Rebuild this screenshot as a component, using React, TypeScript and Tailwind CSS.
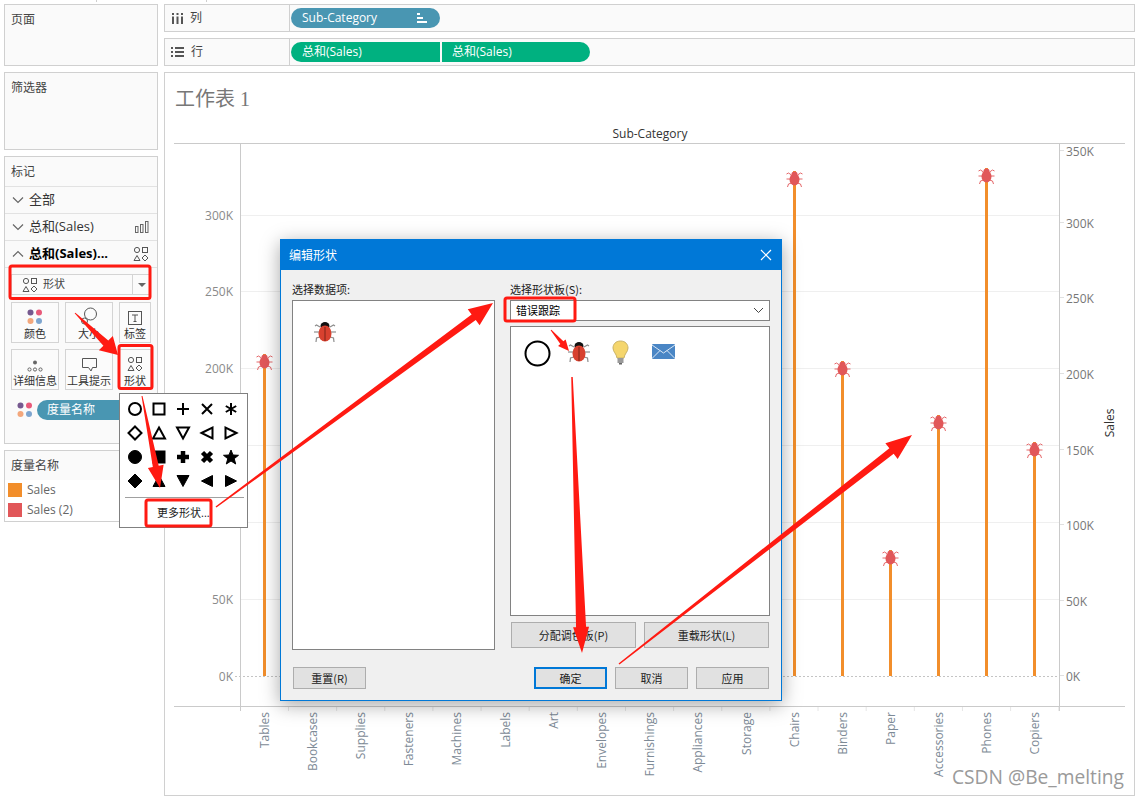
import type { ReactNode } from "react";

const bars = [
  { name: "Tables", x: 264.5, y: 362 },
  { name: "Bookcases", x: 312.7, y: 500 },
  { name: "Supplies", x: 360.9, y: 600 },
  { name: "Fasteners", x: 409, y: 660 },
  { name: "Machines", x: 457.3, y: 500 },
  { name: "Labels", x: 505.5, y: 650 },
  { name: "Art", x: 553.7, y: 620 },
  { name: "Envelopes", x: 601.9, y: 640 },
  { name: "Furnishings", x: 650, y: 560 },
  { name: "Appliances", x: 698.3, y: 560 },
  { name: "Storage", x: 746.5, y: 500 },
  { name: "Chairs", x: 794.5, y: 179 },
  { name: "Binders", x: 842.5, y: 369 },
  { name: "Paper", x: 890.5, y: 558 },
  { name: "Accessories", x: 938.5, y: 423 },
  { name: "Phones", x: 986.5, y: 176 },
  { name: "Copiers", x: 1034.5, y: 450 },
];

const leftTicks = [
  { label: "300K", y: 215 },
  { label: "250K", y: 291 },
  { label: "200K", y: 368 },
  { label: "150K", y: 445 },
  { label: "100K", y: 522 },
  { label: "50K", y: 599 },
  { label: "0K", y: 676 },
];

const rightTicks = [
  { label: "350K", y: 151 },
  { label: "300K", y: 223 },
  { label: "250K", y: 298 },
  { label: "200K", y: 374 },
  { label: "150K", y: 450 },
  { label: "100K", y: 525 },
  { label: "50K", y: 601 },
  { label: "0K", y: 676 },
];

const cjk = "font-['Open_Sans','Noto_Sans_CJK_SC',sans-serif]";
const dialogFont = "font-['Noto_Sans_CJK_SC','Liberation_Sans',sans-serif]";

// chart mark, x/y are the centre of the bug
const ChartBug = ({ x, y }: { x: number; y: number }) => (
  <g transform={`translate(${x} ${y})`}>
    <g stroke="#e15759" strokeWidth="0.9" fill="none">
      <path d="M-3 -4 L-6 -6 L-8 -5" />
      <path d="M3 -4 L6 -6 L8 -5" />
      <path d="M-4 0 L-8 0" />
      <path d="M4 0 L8 0" />
      <path d="M-3 4 L-6 5 L-7 8" />
      <path d="M3 4 L6 5 L7 8" />
    </g>
    <ellipse cx="0" cy="-5" rx="3" ry="2.5" fill="#e15759" />
    <ellipse cx="0" cy="0.5" rx="5" ry="6" fill="#e15759" />
  </g>
);

const DialogBug = () => (
  <svg width="24" height="24" viewBox="0 0 24 24" fill="none">
    <g stroke="#8d8d8d" strokeWidth="1.2">
      <path d="M7 7 L3.5 5 L2 6" />
      <path d="M17 7 L20.5 5 L22 6" />
      <path d="M6 12 L1 12" />
      <path d="M18 12 L23 12" />
      <path d="M7 17 L3.5 18 L3 22" />
      <path d="M17 17 L20.5 18 L21 22" />
    </g>
    <ellipse cx="12" cy="6" rx="4.5" ry="4" fill="#111" />
    <ellipse cx="12" cy="13.5" rx="6.5" ry="8" fill="#d8412f" />
    <path d="M12 7 V21" stroke="#7d2418" strokeWidth="1" />
  </svg>
);

const ShapesIcon = ({ size = 16 }: { size?: number }) => (
  <svg width={size} height={size} viewBox="0 0 16 16" fill="none" stroke="#555" strokeWidth="1">
    <circle cx="4" cy="4" r="2.6" />
    <rect x="9.5" y="1.5" width="5" height="5" />
    <path d="M4 9.5 L7 14.5 H1 Z" />
    <path d="M12 9 L15 12 L12 15 L9 12 Z" />
  </svg>
);

const ColorDots = () => (
  <svg width="16" height="16" viewBox="0 0 16 16">
    <circle cx="3.5" cy="3.5" r="3" fill="#76598f" />
    <circle cx="12" cy="3.5" r="3" fill="#e85a7a" />
    <circle cx="3.5" cy="12" r="3" fill="#f3a77c" />
    <circle cx="12" cy="12" r="3" fill="#7ea5cf" />
  </svg>
);

const shapes: ReactNode[] = [
  <circle cx="9" cy="9" r="6" fill="none" strokeWidth="2" />,
  <rect x="3.5" y="3.5" width="11" height="11" fill="none" strokeWidth="2" />,
  <path d="M9 3 V15 M3 9 H15" strokeWidth="2" />,
  <path d="M4 4 L14 14 M14 4 L4 14" strokeWidth="2" />,
  <path d="M9 3 V15 M3.8 6 L14.2 12 M14.2 6 L3.8 12" strokeWidth="2" />,
  <path d="M9 2.5 L15.5 9 L9 15.5 L2.5 9 Z" fill="none" strokeWidth="2" />,
  <path d="M9 3.5 L15 14.5 H3 Z" fill="none" strokeWidth="2" />,
  <path d="M9 14.5 L15 3.5 H3 Z" fill="none" strokeWidth="2" />,
  <path d="M3.5 9 L14.5 3.5 V14.5 Z" fill="none" strokeWidth="2" />,
  <path d="M14.5 9 L3.5 3.5 V14.5 Z" fill="none" strokeWidth="2" />,
  <circle cx="9" cy="9" r="6.5" fill="#000" />,
  <rect x="3" y="3" width="12" height="12" fill="#000" />,
  <path d="M9 3 V15 M3 9 H15" strokeWidth="4.5" />,
  <path d="M4.5 4.5 L13.5 13.5 M13.5 4.5 L4.5 13.5" strokeWidth="4.5" />,
  <path d="M9 2 L11 7 L16.5 7.3 L12.2 10.7 L13.7 16 L9 13 L4.3 16 L5.8 10.7 L1.5 7.3 L7 7 Z" fill="#000" />,
  <path d="M9 2 L16 9 L9 16 L2 9 Z" fill="#000" />,
  <path d="M9 3.5 L15 14.5 H3 Z" fill="#000" />,
  <path d="M9 14.5 L15 3.5 H3 Z" fill="#000" />,
  <path d="M3.5 9 L14.5 3.5 V14.5 Z" fill="#000" />,
  <path d="M14.5 9 L3.5 3.5 V14.5 Z" fill="#000" />,
];

const MarkCard = ({ label, icon, className = "" }: { label: string; icon: ReactNode; className?: string }) => (
  <div className={`flex h-[41px] flex-col items-center border border-[#d4d4d4] bg-[#fbfbfb] ${className}`}>
    <div className="flex h-[22px] items-end">{icon}</div>
    <span className="mt-[1px] whitespace-nowrap text-[11px] leading-[16px] text-[#333]">{label}</span>
  </div>
);

const MarkRow = ({ label, open, bold, icon }: { label: string; open?: boolean; bold?: boolean; icon?: ReactNode }) => (
  <div className="flex h-[27px] items-center border-t border-[#e2e2e2] pl-[7px] pr-[8px]">
    <svg width="12" height="8" viewBox="0 0 12 8" fill="none" stroke="#666" strokeWidth="1.2">
      <path d={open ? "M1 6.5 L6 1.5 L11 6.5" : "M1 1.5 L6 6.5 L11 1.5"} />
    </svg>
    <span className={`ml-[5px] flex-1 whitespace-nowrap text-[13px] text-[#333] ${bold ? "font-bold text-black" : ""}`}>{label}</span>
    {icon}
  </div>
);

const DialogButton = ({ label, className = "border border-[#adadad]" }: { label: string; className?: string }) => (
  <div className={`flex items-center justify-center bg-[#e1e1e1] text-[11px] text-[#222] ${className}`}>{label}</div>
);

// tapered annotation arrow: narrow at the tail, with a head at the tip
const arrowPoints = (x1: number, y1: number, x2: number, y2: number, tail: number, neck: number, head: number, headLen: number) => {
  const len = Math.hypot(x2 - x1, y2 - y1);
  const ux = (x2 - x1) / len;
  const uy = (y2 - y1) / len;
  const nx = -uy;
  const ny = ux;
  const bx = x2 - ux * headLen;
  const by = y2 - uy * headLen;
  const pts = [
    [x1 + (nx * tail) / 2, y1 + (ny * tail) / 2],
    [bx + (nx * neck) / 2, by + (ny * neck) / 2],
    [bx + (nx * head) / 2, by + (ny * head) / 2],
    [x2, y2],
    [bx - (nx * head) / 2, by - (ny * head) / 2],
    [bx - (nx * neck) / 2, by - (ny * neck) / 2],
    [x1 - (nx * tail) / 2, y1 - (ny * tail) / 2],
  ];
  return pts.map((p) => p.join(",")).join(" ");
};

const Annotations = () => (
  <svg className="pointer-events-none absolute left-0 top-0" width="1138" height="798" viewBox="0 0 1138 798">
    <g fill="none" stroke="#ff1a12" strokeWidth="3">
      <rect x="10" y="266" width="140" height="32.5" rx="2" />
      <rect x="119" y="345.5" width="33" height="43" rx="2" />
      <rect x="146" y="500" width="65" height="26" rx="2" />
      <rect x="505" y="298" width="70" height="23" rx="2" />
    </g>
    <g fill="#ff1a12">
      <polygon points={arrowPoints(75, 313, 118, 355, 1, 7, 20, 17)} />
      <polygon points={arrowPoints(142, 396, 160, 488, 1, 6, 16, 22)} />
      <polygon points={arrowPoints(216, 507, 493, 303, 1.5, 7, 20, 24)} />
      <polygon points={arrowPoints(551, 330, 569, 351, 1, 4, 10, 11)} />
      <polygon points={arrowPoints(572, 377, 582, 653, 1.5, 10, 16, 26)} />
      <polygon points={arrowPoints(619, 664, 912, 435, 1.5, 7, 20, 26)} />
    </g>
  </svg>
);

const ShapePicker = () => (
  <div className="absolute left-[119px] top-[393px] h-[135px] w-[129px] border border-[#808080] bg-white pl-[3px] pt-[3px]">
    <div className="grid grid-cols-[repeat(5,24px)]">
      {shapes.map((s, i) => (
        <div key={i} className="flex h-[24px] w-[24px] items-center justify-center">
          <svg width="18" height="18" viewBox="0 0 18 18" stroke="#000">
            {s}
          </svg>
        </div>
      ))}
    </div>
    <div className="mr-[3px] ml-[2px] mt-[4px] border-t border-[#a0a0a0] pl-[32px] pt-[7px] text-[11px] leading-[16px] text-[#222]">更多形状...</div>
  </div>
);

const ShapesDialog = () => (
  <div className={`absolute left-[280px] top-[239px] h-[462px] w-[502px] border border-[#0078d7] bg-[#f0f0f0] shadow-[0_4px_18px_rgba(0,0,0,0.35)] ${dialogFont}`}>
    <div className="flex h-[30px] items-center justify-between bg-[#0078d7] pl-[8px] pr-[9px] text-[12px] text-white">
      <span>编辑形状</span>
      <svg width="12" height="12" viewBox="0 0 12 12" stroke="#fff" strokeWidth="1.2">
        <path d="M1 1 L11 11 M11 1 L1 11" />
      </svg>
    </div>
    <div className="flex gap-[15px] pl-[11px] pt-[11px]">
      <div className="w-[203px]">
        <div className="h-[19px] text-[11px] leading-[16px] text-[#222]">选择数据项:</div>
        <div className="h-[350px] border border-[#828282] bg-white pl-[20px] pt-[19px]">
          <DialogBug />
        </div>
      </div>
      <div className="w-[260px]">
        <div className="h-[19px] text-[11px] leading-[16px] text-[#222]">选择形状板(S):</div>
        <div className="flex h-[21px] items-center justify-between border border-[#828282] bg-white pl-[5px] pr-[5px] text-[11px] text-black">
          <span>错误跟踪</span>
          <svg width="11" height="7" viewBox="0 0 11 7" fill="none" stroke="#444">
            <path d="M1 1 L5.5 5.5 L10 1" />
          </svg>
        </div>
        <div className="mt-[5px] flex h-[290px] items-start border border-[#828282] bg-white pl-[13px] pt-[13px]">
          <svg width="27" height="27" viewBox="0 0 27 27" fill="none" stroke="#000" strokeWidth="2">
            <circle cx="13.5" cy="13.5" r="12" />
          </svg>
          <div className="ml-[16px]">
            <DialogBug />
          </div>
          <svg className="ml-[20px]" width="19" height="25" viewBox="0 0 19 25">
            <path d="M9.5 1 C4.5 1 2 4.5 2 8 C2 12 5.5 13.5 6 18 H13 C13.5 13.5 17 12 17 8 C17 4.5 14.5 1 9.5 1 Z" fill="#f5d66d" stroke="#c9b266" />
            <rect x="6.5" y="18" width="6" height="5" fill="#9a9a9a" />
            <rect x="8" y="23" width="3" height="1.5" fill="#666" />
          </svg>
          <svg className="ml-[22px] mt-[4px]" width="23" height="15" viewBox="0 0 23 15">
            <rect width="23" height="15" rx="1" fill="#4a86c5" />
            <path d="M0 1 L11.5 9 L23 1 M0 14.5 L8 6.5 M23 14.5 L15 6.5" fill="none" stroke="#dbe8f5" strokeWidth="1" />
          </svg>
        </div>
        <div className="mt-[6px] flex gap-[8px] pl-[1px]">
          <DialogButton label="分配调色板(P)" className="h-[26px] w-[125px] border border-[#adadad]" />
          <DialogButton label="重载形状(L)" className="h-[26px] w-[125px] border border-[#adadad]" />
        </div>
      </div>
    </div>
    <div className="flex pl-[12px] pt-[17px]">
      <DialogButton label="重置(R)" className="h-[22px] w-[73px] border border-[#adadad]" />
      <DialogButton label="确定" className="ml-[168px] h-[22px] w-[73px] border-2 border-[#0078d7]" />
      <DialogButton label="取消" className="ml-[8px] h-[22px] w-[73px] border border-[#adadad]" />
      <DialogButton label="应用" className="ml-[8px] h-[22px] w-[73px] border border-[#adadad]" />
    </div>
  </div>
);

const Chart = () => (
  <svg className="block" width="969" height="670" viewBox="165 125 969 670" fontFamily="'Open Sans', sans-serif">
    <text x="650" y="138" fontSize="12" fill="#333" textAnchor="middle">Sub-Category</text>
    {leftTicks.slice(0, -1).map((t) => (
      <line key={t.y} x1="240" x2="1059" y1={t.y + 0.5} y2={t.y + 0.5} stroke="#efefef" />
    ))}
    <line x1="235" x2="1059" y1="676.5" y2="676.5" stroke="#c4c4c4" strokeDasharray="2 2" />
    <line x1="174" x2="1125" y1="143.5" y2="143.5" stroke="#cacaca" />
    <line x1="174" x2="1125" y1="706.5" y2="706.5" stroke="#cacaca" />
    <line x1="240.5" x2="240.5" y1="143" y2="711" stroke="#cacaca" />
    <line x1="1059.5" x2="1059.5" y1="143" y2="711" stroke="#cacaca" />
    {bars.map((b, i) => (
      <line key={b.name} x1={288.5 + i * 48.14} x2={288.5 + i * 48.14} y1="707" y2="711" stroke="#e6e6e6" />
    ))}
    {leftTicks.map((t) => (
      <text key={t.label} x="233" y={t.y + 5} fontSize="12" fill="#8a8a8a" textAnchor="end">{t.label}</text>
    ))}
    {rightTicks.map((t) => (
      <g key={t.label}>
        <line x1="1060" x2="1064" y1={t.y - 0.5} y2={t.y - 0.5} stroke="#e0e0e0" />
        <text x="1066" y={t.y + 5} fontSize="12" fill="#777">{t.label}</text>
      </g>
    ))}
    <text transform="translate(1114 423) rotate(-90)" fontSize="12" fill="#333" textAnchor="middle">Sales</text>
    {bars.map((b) => (
      <g key={b.name}>
        <rect x={b.x - 1.5} y={b.y - 8} width="3" height={676 - b.y + 8} fill="#f28e2b" />
        <ChartBug x={b.x} y={b.y} />
        <text transform={`translate(${b.x + 4} 712) rotate(-90)`} fontSize="12" fill="#7d8a96" textAnchor="end">{b.name}</text>
      </g>
    ))}
  </svg>
);

export default function App() {
  return (
    <div className={`relative h-[798px] w-[1138px] overflow-hidden bg-white ${cjk}`}>
      <div className="flex h-[4px] text-[0px]">
        <span className="ml-[96px] h-[2px] w-[1px] bg-[#cfcfcf]" />
        <span className="ml-[109px] h-[2px] w-[1px] bg-[#cfcfcf]" />
      </div>
      <div className="flex gap-[6px] pl-[4px]">
        <div className="flex w-[154px] flex-col gap-[6px]">
          <div className="h-[62px] border border-[#d0d0d0] bg-[#fafafa] px-[6px] py-[6px] text-[12px] text-[#444]">页面</div>
          <div className="h-[78px] border border-[#d0d0d0] bg-[#fafafa] px-[6px] py-[6px] text-[12px] text-[#444]">筛选器</div>
          <div className="h-[288px] border border-[#d0d0d0] bg-[#fafafa]">
            <div className="flex h-[29px] items-center px-[6px] text-[12px] text-[#444]">标记</div>
            <MarkRow label="全部" />
            <MarkRow
              label="总和(Sales)"
              icon={
                <svg width="14" height="12" viewBox="0 0 14 12" fill="none" stroke="#666">
                  <rect x="0.5" y="5.5" width="2.5" height="6" />
                  <rect x="5.5" y="3.5" width="2.5" height="8" />
                  <rect x="10.5" y="0.5" width="2.5" height="11" />
                </svg>
              }
            />
            <MarkRow label="总和(Sales)..." open bold icon={<ShapesIcon />} />
            <div className="border-t border-[#e2e2e2] px-[6px] pt-[6px]">
              <div className="flex h-[21px] items-center border border-[#d4d4d4] bg-[#fbfbfb] pl-[10px] text-[11px] text-[#444]">
                <ShapesIcon />
                <span className="ml-[5px] flex-1">形状</span>
                <div className="flex h-full w-[18px] items-center justify-center border-l border-[#d4d4d4]">
                  <span className="h-0 w-0 border-x-[4px] border-t-[4px] border-x-transparent border-t-[#666]" />
                </div>
              </div>
              <div className="mt-[7px] flex gap-[6px]">
                <MarkCard label="颜色" icon={<ColorDots />} className="w-[48px]" />
                <MarkCard
                  label="大小"
                  className="w-[48px]"
                  icon={
                    <svg width="16" height="18" viewBox="0 0 16 18" fill="none" stroke="#555">
                      <circle cx="9.5" cy="7" r="6" />
                      <circle cx="3.5" cy="14" r="3" fill="#fbfbfb" />
                    </svg>
                  }
                />
                <MarkCard
                  label="标签"
                  className="w-[32px]"
                  icon={
                    <svg width="14" height="14" viewBox="0 0 14 14" fill="none" stroke="#555">
                      <rect x="0.5" y="0.5" width="13" height="13" />
                      <path d="M4 4 H10 M7 4 V10.5 M5.5 10.5 H8.5" />
                    </svg>
                  }
                />
              </div>
              <div className="mt-[6px] flex gap-[6px]">
                <MarkCard
                  label="详细信息"
                  className="w-[48px]"
                  icon={
                    <svg width="16" height="12" viewBox="0 0 16 12" fill="none" stroke="#666">
                      <circle cx="8" cy="2.5" r="2" fill="#666" stroke="none" />
                      <circle cx="2.5" cy="9.5" r="1.6" />
                      <circle cx="8" cy="9.5" r="1.6" />
                      <circle cx="13.5" cy="9.5" r="1.6" />
                    </svg>
                  }
                />
                <MarkCard
                  label="工具提示"
                  className="w-[48px]"
                  icon={
                    <svg width="15" height="14" viewBox="0 0 15 14" fill="none" stroke="#555">
                      <path d="M0.5 0.5 H14.5 V9.5 H10.5 L9 13 L6.5 9.5 H0.5 Z" />
                    </svg>
                  }
                />
                <MarkCard label="形状" className="w-[32px]" icon={<ShapesIcon />} />
              </div>
              <div className="mt-[10px] flex items-center pl-[6px]">
                <ColorDots />
                <div className="ml-[4px] flex h-[20px] w-[110px] items-center rounded-l-full bg-[#4996b2] pl-[10px] text-[12px] text-white">度量名称</div>
              </div>
            </div>
          </div>
          <div className="h-[72px] border border-[#d0d0d0] bg-[#fafafa]">
            <div className="flex h-[29px] items-center px-[6px] text-[12px] text-[#444]">度量名称</div>
            <div className="h-[41px] bg-white pl-[3px]">
              <div className="flex h-[20px] items-center text-[12px] text-[#666]">
                <span className="mr-[5px] h-[14px] w-[14px] bg-[#f28e2b]" />
                Sales
              </div>
              <div className="flex h-[20px] items-center text-[12px] text-[#666]">
                <span className="mr-[5px] h-[14px] w-[14px] bg-[#e15759]" />
                Sales (2)
              </div>
            </div>
          </div>
        </div>
        <div className="flex w-[971px] flex-col gap-[6px]">
          <div className="flex h-[28px] items-center border border-[#d0d0d0] bg-[#fafafa] text-[12px] text-[#444]">
            <div className="flex h-full w-[125px] items-center border-r border-[#d0d0d0] pl-[7px]">
              <svg width="11" height="11" viewBox="0 0 11 11" fill="#555">
                <rect y="3.5" width="2" height="7.5" />
                <rect x="4.5" y="3.5" width="2" height="7.5" />
                <rect x="9" y="3.5" width="2" height="7.5" />
                <rect y="0" width="2" height="2" />
                <rect x="4.5" y="0" width="2" height="2" />
                <rect x="9" y="0" width="2" height="2" />
              </svg>
              <span className="ml-[7px]">列</span>
            </div>
            <div className="ml-[1px] flex h-[20px] w-[149px] items-center justify-between rounded-full bg-[#4996b2] pl-[11px] pr-[13px] text-white">
              Sub-Category
              <svg width="10" height="10" viewBox="0 0 10 10" fill="#fff">
                <rect x="0" y="0" width="3" height="2" />
                <rect x="0" y="4" width="6" height="2" />
                <rect x="0" y="8" width="10" height="2" />
              </svg>
            </div>
          </div>
          <div className="flex h-[28px] items-center border border-[#d0d0d0] bg-[#fafafa] text-[12px] text-[#444]">
            <div className="flex h-full w-[125px] items-center border-r border-[#d0d0d0] pl-[6px]">
              <svg width="13" height="10" viewBox="0 0 13 10" fill="#555">
                <rect y="0" width="2" height="2" />
                <rect y="4" width="2" height="2" />
                <rect y="8" width="2" height="2" />
                <rect x="4" y="0" width="9" height="2" />
                <rect x="4" y="4" width="9" height="2" />
                <rect x="4" y="8" width="9" height="2" />
              </svg>
              <span className="ml-[7px]">行</span>
            </div>
            <div className="ml-[1px] flex h-[20px] w-[149px] items-center rounded-l-full bg-[#00b180] pl-[11px] text-white">总和(Sales)</div>
            <div className="ml-[2px] flex h-[20px] w-[148px] items-center rounded-r-full bg-[#00b180] pl-[10px] text-white">总和(Sales)</div>
          </div>
          <div className="h-[724px] border border-[#d0d0d0] bg-white">
            <div className="h-[52px] pl-[10px] pt-[12px] font-['Liberation_Serif','Noto_Sans_CJK_SC',serif] text-[20px] leading-[28px] text-[#777]">工作表 1</div>
            <Chart />
          </div>
        </div>
      </div>
      <ShapePicker />
      <ShapesDialog />
      <Annotations />
      <div className="absolute left-[952px] top-[764px] whitespace-nowrap font-['Open_Sans',sans-serif] text-[19.2px] leading-[26px] text-[#9a9a9a]">CSDN @Be_melting</div>
    </div>
  );
}
